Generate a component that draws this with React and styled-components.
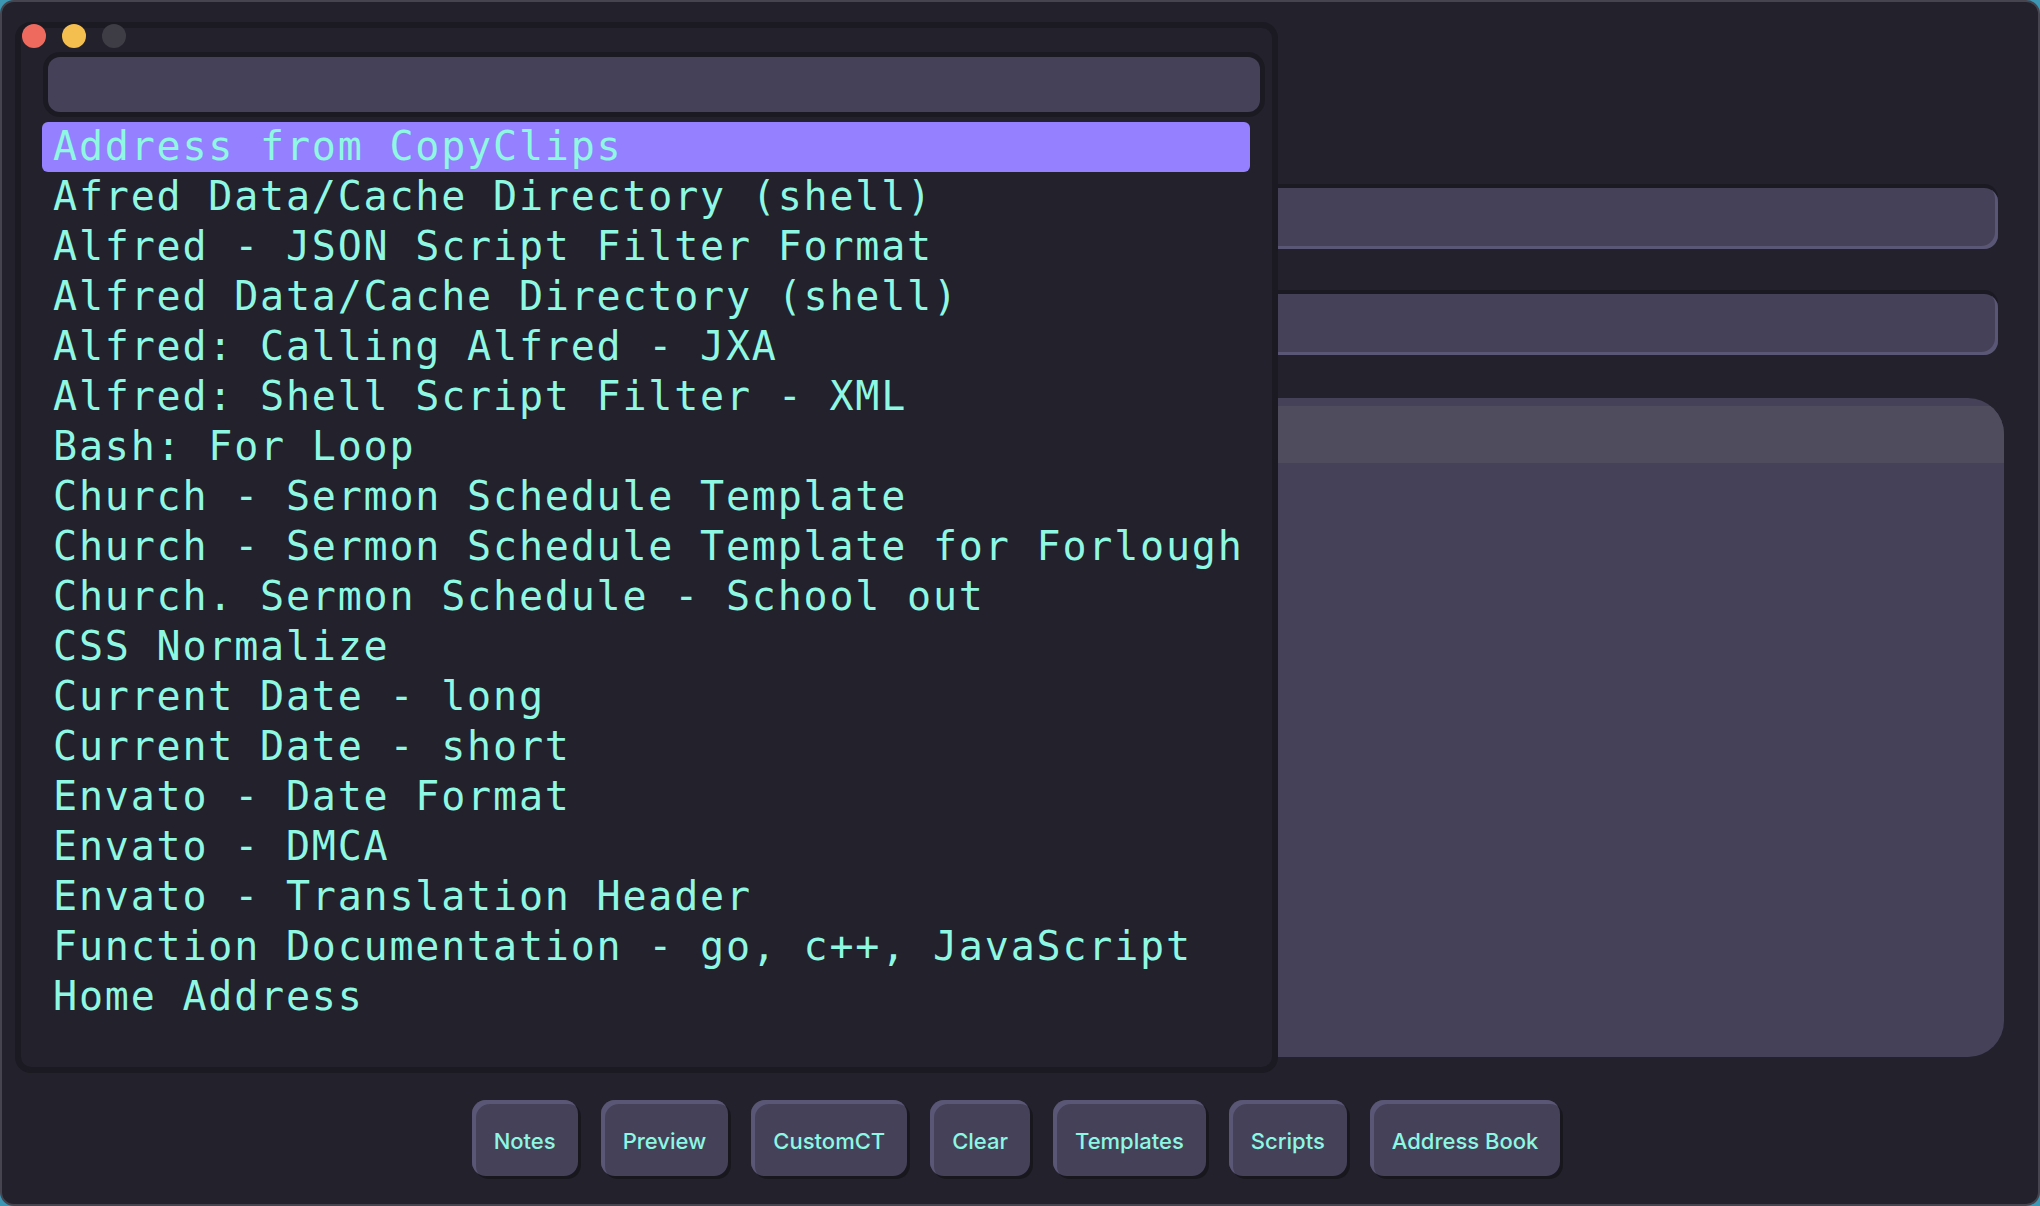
import React from 'react';
import styled, { createGlobalStyle } from 'styled-components';

const snippets = [
  'Address from CopyClips',
  'Afred Data/Cache Directory (shell)',
  'Alfred - JSON Script Filter Format',
  'Alfred Data/Cache Directory (shell)',
  'Alfred: Calling Alfred - JXA',
  'Alfred: Shell Script Filter - XML',
  'Bash: For Loop',
  'Church - Sermon Schedule Template',
  'Church - Sermon Schedule Template for Forlough',
  'Church. Sermon Schedule - School out',
  'CSS Normalize',
  'Current Date - long',
  'Current Date - short',
  'Envato - Date Format',
  'Envato - DMCA',
  'Envato - Translation Header',
  'Function Documentation - go, c++, JavaScript',
  'Home Address'
];

const actions = [
  'Notes',
  'Preview',
  'CustomCT',
  'Clear',
  'Templates',
  'Scripts',
  'Address Book'
];

const lights = ['#ee6a5f', '#f5bf4f', '#3e3d46'];

const GlobalStyle = createGlobalStyle`
  html, body {
    margin: 0;
    padding: 0;
    background: #3c97b5;
  }
  * {
    box-sizing: border-box;
  }
`;

const App = () => {
  return (
    <>
      <GlobalStyle />
      <Window>
        <Lights>
          {lights.map(color => (
            <Light key={color} color={color} />
          ))}
        </Lights>

        <Main>
          <Field />
          <Field spaced />
          <Editor>
            <ActiveLine />
          </Editor>
          <ButtonBar>
            {actions.map(label => (
              <ActionButton key={label}>{label}</ActionButton>
            ))}
          </ButtonBar>
        </Main>

        {/* snippet picker popup, sits over the main form */}
        <Picker>
          <SearchBox />
          <List>
            {snippets.map((name, i) => (
              <Item key={i} selected={i === 0}>
                {name}
              </Item>
            ))}
          </List>
        </Picker>
      </Window>
    </>
  );
};

const Window = styled.div`
  position: relative;
  width: 100vw;
  height: 100vh;
  background: #22212c;
  border: 2px solid #46454f;
  border-radius: 14px;
  overflow: hidden;
`;

const Lights = styled.div`
  position: absolute;
  top: 22px;
  left: 20px;
  z-index: 3;
  display: flex;
  gap: 16px;
`;

const Light = styled.span`
  width: 24px;
  height: 24px;
  border-radius: 50%;
  background: ${props => props.color};
`;

const Main = styled.div`
  display: flex;
  flex-direction: column;
  padding: 186px 40px 0 40px;
`;

const Field = styled.div`
  height: 61px;
  margin-top: ${props => (props.spaced ? '45px' : '0')};
  background: #454158;
  border-radius: 14px;
  box-shadow: 0 -4px 0 #1b1a22, inset -3px -3px 0 #5a5675;
`;

const Editor = styled.div`
  height: 659px;
  margin: 43px -6px 0 -6px;
  padding-top: 8px;
  background: #454158;
  border-radius: 36px;
  overflow: hidden;
`;

const ActiveLine = styled.div`
  height: 57px;
  background: #4f4c5e;
`;

const ButtonBar = styled.div`
  display: flex;
  justify-content: center;
  gap: 23px;
  margin: 43px 8px 0 0;
`;

const ActionButton = styled.button`
  height: 76px;
  padding: 5px 22px 0 22px;
  border: none;
  border-radius: 14px;
  background: #454158;
  box-shadow: inset 4px 4px 0 #5a5676, 3px 3px 0 #18171e;
  color: #8cf7e2;
  font-family: Inter, 'Noto Sans', sans-serif;
  font-size: 22px;
  font-weight: 500;
  cursor: pointer;
`;

const Picker = styled.div`
  position: absolute;
  top: 20px;
  left: 13px;
  z-index: 2;
  width: 1263px;
  height: 1051px;
  display: flex;
  flex-direction: column;
  background: #22212c;
  border: 6px solid #1b1a22;
  border-radius: 16px;
`;

const SearchBox = styled.div`
  height: 55px;
  margin: 29px 12px 0 27px;
  background: #454158;
  border-radius: 12px;
  box-shadow: 0 0 0 5px #1b1a22;
`;

const List = styled.ul`
  list-style: none;
  margin: 10px 0 0 0;
  padding: 0;
`;

const Item = styled.li`
  height: 50px;
  margin: 0 22px 0 21px;
  padding-left: 11px;
  border-radius: 6px;
  background: ${props => (props.selected ? '#9580ff' : 'transparent')};
  color: #8ff8e3;
  font-family: 'DejaVu Sans Mono', 'Liberation Mono', monospace;
  font-size: 40px;
  letter-spacing: 1.8px;
  line-height: 49px;
  white-space: nowrap;
`;

export default App;
